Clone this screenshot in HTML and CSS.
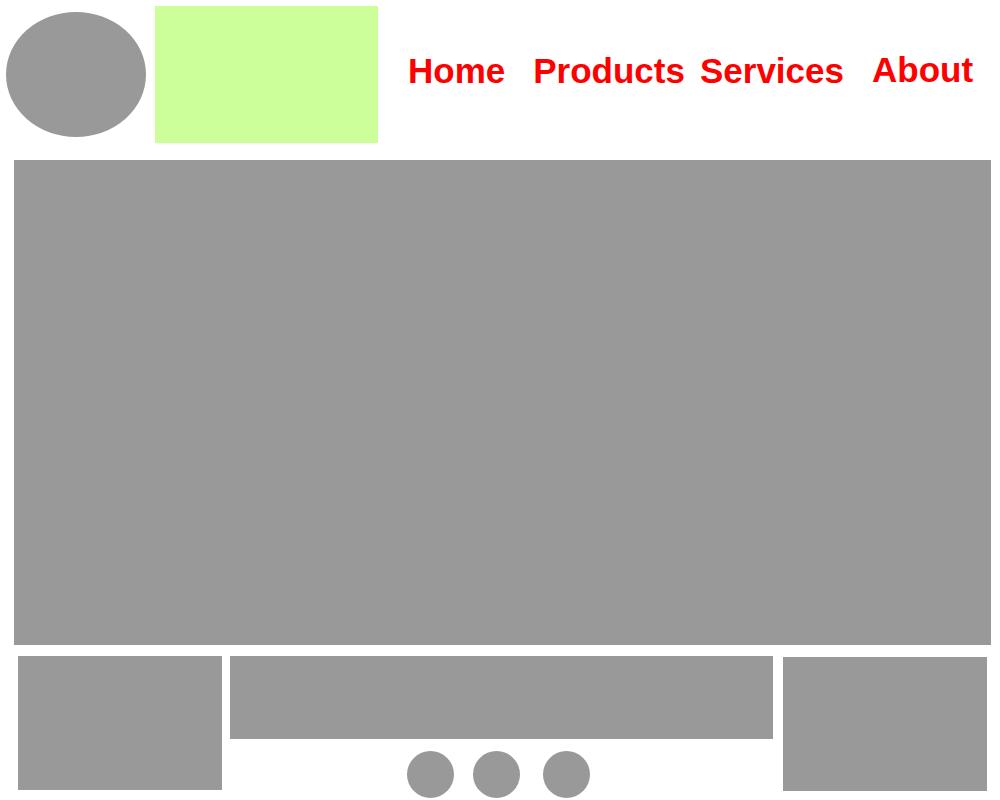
FILE: index.html
```html
<!doctype html>
<html>
 <head>
  <meta http-equiv="Content-Type" content="text/html; charset=UTF-8">
  <title>Home</title>
  <link rel="stylesheet" href="styles.css">
 </head>
 <body>
    <!--S. header-->
    <div id="header">
        <div class="logo"></div>
        <div class="banner"></div>
        <ul class="nav">
            <li class="n_home">Home</li>
            <li class="n_products">Products</li>
            <li class="n_services">Services</li>
            <li class="n_about">About</li>
        </ul>
    </div>
    <!--E. header-->

    <div id="hero"></div>

    <!--S. bottom-->
    <div id="bottom">
        <div class="b_left"></div>
        <div class="b_mid">
            <div class="b_box"></div>
            <div class="dots">
                <span class="dot d1"></span>
                <span class="dot d2"></span>
                <span class="dot d3"></span>
            </div>
        </div>
        <div class="b_right"></div>
    </div>
    <!--E. bottom-->
 </body>
</html>
```

FILE: styles.css
```css
*{padding:0;margin:0;box-sizing:border-box;}
body{font-family:"Liberation Sans",Arial,sans-serif;background:#fff;}
/*S. header*/
#header{display:flex;align-items:flex-start;height:143px;}
#header .logo{width:140px;height:125px;margin:12px 0 0 6px;background:#999;border-radius:50%;}
#header .banner{width:223px;height:137px;margin:6px 0 0 9px;background:#ccff99;}
#header .nav{display:flex;list-style:none;margin:51px 0 0 30px;}
#header .nav li{font-size:35px;font-weight:bold;color:#f00;line-height:40px;white-space:nowrap;}
#header .nav .n_products{margin-left:28px;}
#header .nav .n_services{margin-left:15px;}
#header .nav .n_about{margin-left:28px;position:relative;top:-1px;}
/*E. header*/
#hero{width:977px;height:485px;margin:17px 0 0 14px;background:#999;}
/*S. bottom*/
#bottom{display:flex;align-items:flex-start;margin-top:11px;}
#bottom .b_left{width:204px;height:134px;margin-left:18px;background:#999;}
#bottom .b_mid{width:543px;margin-left:8px;}
#bottom .b_box{height:83px;background:#999;}
#bottom .dots{display:flex;margin:12px 0 0 177px;}
#bottom .dot{width:47px;height:47px;border-radius:50%;background:#999;}
#bottom .d2{margin-left:19px;}
#bottom .d3{margin-left:23px;}
#bottom .b_right{width:204px;height:134px;margin:1px 0 0 10px;background:#999;}
/*E. bottom*/
```
